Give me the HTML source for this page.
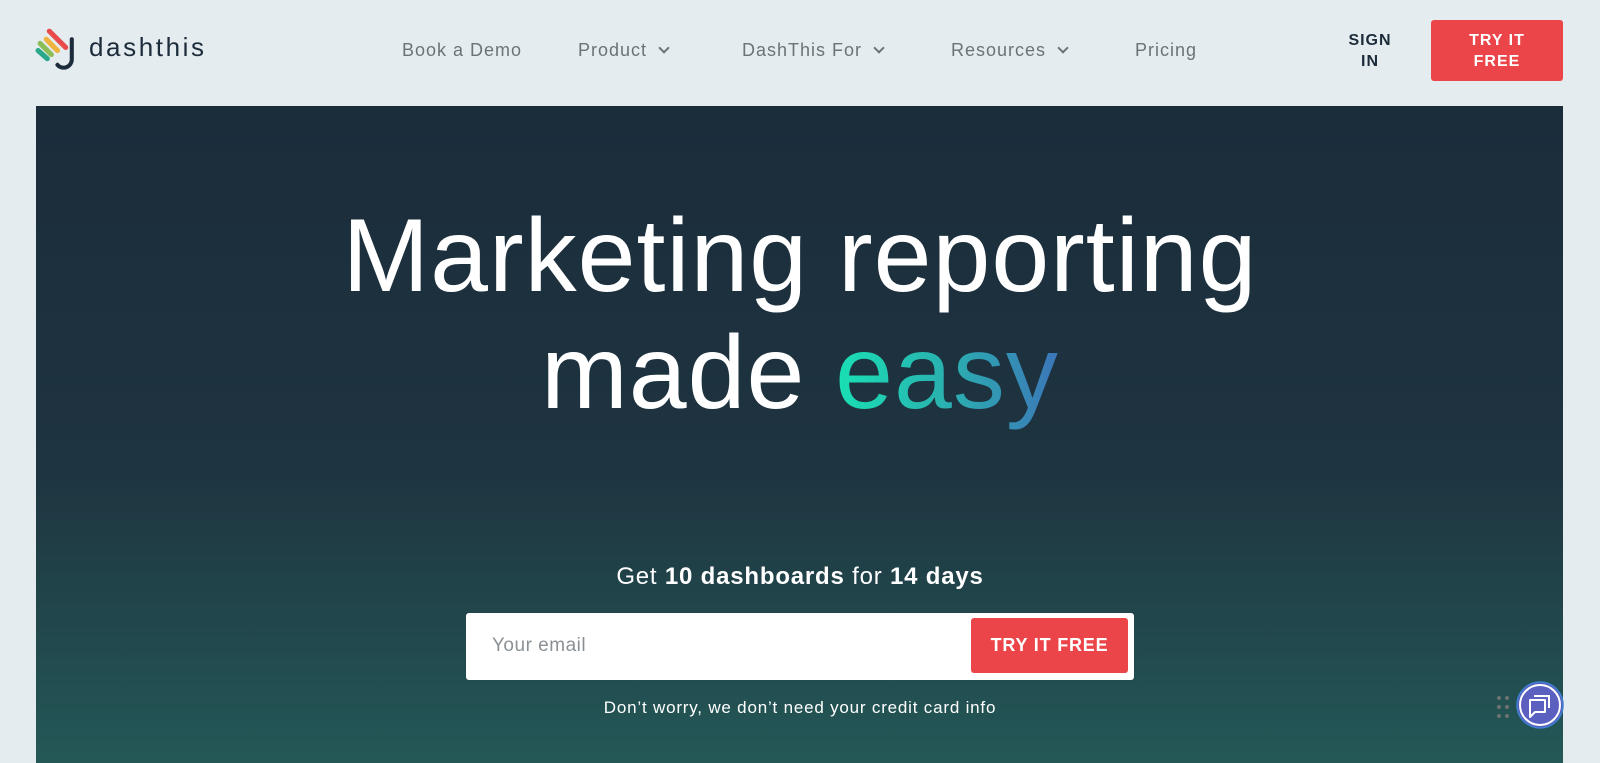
<!DOCTYPE html>
<html><head><meta charset="utf-8"><style>
*{margin:0;padding:0;box-sizing:border-box}
body{width:1600px;height:763px;background:#e4ecef;font-family:"Liberation Sans",sans-serif;position:relative;overflow:hidden}
.nav a{position:absolute;top:40px;font-size:18px;color:#6b7378;letter-spacing:1px;text-decoration:none}
.chev{display:inline-block;width:8px;height:8px;border-right:2px solid #6b7378;border-bottom:2px solid #6b7378;transform:rotate(45deg);margin-left:13px;position:relative;top:-4px}
.hero{position:absolute;left:36px;top:106px;width:1527px;height:657px;background:linear-gradient(#1b2c3b 0%,#1e3440 55%,#245857 100%)}
h1{position:absolute;left:0;width:1600px;top:198px;text-align:center;color:#fff;font-weight:400;font-size:104px;line-height:117px;letter-spacing:1px}
.easy{background:linear-gradient(90deg,#19e0b4,#2ab0b0 50%,#3c76b8);-webkit-background-clip:text;color:transparent}
</style></head><body>
<svg style="position:absolute;left:35px;top:25px" width="46" height="47" viewBox="0 0 45 46">
<line x1="14" y1="6" x2="30" y2="22" stroke="#e94a4a" stroke-width="5" stroke-linecap="round"/>
<line x1="11" y1="14" x2="22" y2="25" stroke="#f0b33e" stroke-width="5" stroke-linecap="round"/>
<line x1="5" y1="18" x2="16" y2="29" stroke="#8cbd56" stroke-width="5" stroke-linecap="round"/>
<line x1="3" y1="25" x2="12" y2="33" stroke="#2aa889" stroke-width="5" stroke-linecap="round"/>
<path d="M36 14 V34 a8 8 0 0 1 -14 5" fill="none" stroke="#1c2c3a" stroke-width="4" stroke-linecap="round"/>
</svg>
<div style="position:absolute;left:89px;top:32px;font-size:26px;color:#1c2c3a;letter-spacing:2.6px">dashthis</div>
<div class="nav">
<a style="left:402px">Book a Demo</a>
<a style="left:578px">Product<span class="chev"></span></a>
<a style="left:742px">DashThis For<span class="chev"></span></a>
<a style="left:951px">Resources<span class="chev"></span></a>
<a style="left:1135px">Pricing</a>
</div>
<div style="position:absolute;left:1342px;top:30px;width:56px;text-align:center;font-size:16px;font-weight:bold;color:#1c2c3a;line-height:21px;letter-spacing:1px">SIGN<br>IN</div>
<div style="position:absolute;left:1431px;top:20px;width:132px;height:61px;background:#ec4549;border-radius:3px;color:#fff;font-size:16px;font-weight:bold;text-align:center;line-height:21px;padding-top:10px;letter-spacing:1px">TRY IT<br>FREE</div>
<div class="hero"></div>
<h1>Marketing reporting<br>made <span class="easy">easy</span></h1>
<div style="position:absolute;left:0;width:1600px;top:563px;text-align:center;color:#fff;font-size:24px;letter-spacing:.8px">Get <b>10 dashboards</b> for <b>14 days</b></div>
<div style="position:absolute;left:466px;top:613px;width:668px;height:67px;background:#fff;border-radius:3px">
<span style="position:absolute;left:26px;top:22px;font-size:19px;color:#8a9196;letter-spacing:.5px">Your email</span>
<div style="position:absolute;left:505px;top:5px;width:157px;height:55px;background:#ec4549;border-radius:3px;color:#fff;font-size:18px;font-weight:bold;text-align:center;line-height:55px;letter-spacing:.8px">TRY IT FREE</div>
</div>
<div style="position:absolute;left:0;width:1600px;top:698px;text-align:center;color:#fff;font-size:17px;letter-spacing:.8px">Don’t worry, we don’t need your credit card info</div>
<svg style="position:absolute;left:1495px;top:694px" width="16" height="26"><g fill="#6d7273"><circle cx="4" cy="4" r="2"/><circle cx="12" cy="4" r="2"/><circle cx="4" cy="13" r="2"/><circle cx="12" cy="13" r="2"/><circle cx="4" cy="22" r="2"/><circle cx="12" cy="22" r="2"/></g></svg>
<svg style="position:absolute;left:1516px;top:681px" width="48" height="48" viewBox="0 0 48 48">
<circle cx="24" cy="24" r="23" fill="#5a5fc0" stroke="#3e7fd0" stroke-width="1.5"/>
<circle cx="24" cy="24" r="20" fill="none" stroke="#fff" stroke-width="2"/>
<path d="M18 15 H33 V27" fill="none" stroke="#fff" stroke-width="2"/>
<path d="M14 19 H29 V31 H19 L14 36 Z" fill="none" stroke="#fff" stroke-width="2" stroke-linejoin="round"/>
</svg>
</body></html>
